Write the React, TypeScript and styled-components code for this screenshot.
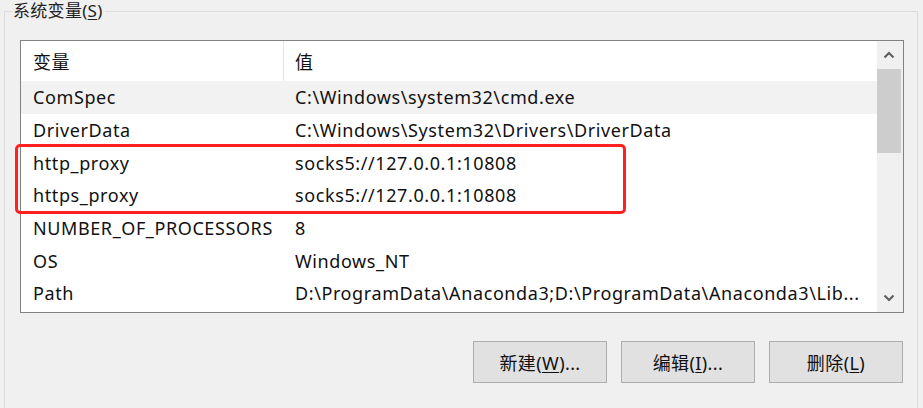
import React from 'react';
import styled, { createGlobalStyle } from 'styled-components';

const GlobalStyle = createGlobalStyle`
  html, body {
    margin: 0;
    padding: 0;
    background: #f0f0f0;
    overflow: hidden;
  }
  body {
    font-family: "Noto Sans", "Noto Sans CJK SC", sans-serif;
    color: #111;
  }
`;

const Page = styled.div`
  position: relative;
  width: 923px;
  height: 408px;
  padding: 1px 0 0 4px;
  box-sizing: border-box;
  overflow: hidden;
`;

const GroupBox = styled.fieldset`
  margin: 0;
  width: 914px;
  height: 440px;
  box-sizing: border-box;
  border: 1px solid #dcdcdc;
  padding: 19px 12px 0 15px;
  min-width: 0;
`;

const GroupTitle = styled.legend`
  margin-left: -8px;
  padding: 0 2px 0 1px;
  font-size: 17px;
  letter-spacing: 0.3px;
  line-height: 20px;
  color: #222;
`;

const ListBox = styled.div`
  width: 884px;
  height: 273px;
  box-sizing: border-box;
  border: 1px solid #828282;
  background: #fff;
  display: flex;
  overflow: hidden;
`;

const Table = styled.div`
  flex: 1;
  display: flex;
  flex-direction: column;
  min-width: 0;
`;

const HeaderRow = styled.div`
  display: grid;
  grid-template-columns: 263px 1fr;
  height: 40px;
  flex-shrink: 0;
`;

const HeaderCell = styled.div<{ $divider?: boolean }>`
  display: flex;
  align-items: center;
  padding-left: ${(p) => (p.$divider ? '12px' : '11px')};
  border-right: ${(p) => (p.$divider ? '1px solid #e5e5e5' : 'none')};
  font-size: 18px;
  letter-spacing: 0.5px;
`;

const Row = styled.div<{ $hover?: boolean }>`
  display: grid;
  grid-template-columns: 263px 1fr;
  height: 32.7px;
  flex-shrink: 0;
  align-items: center;
  background: ${(p) => (p.$hover ? '#f2f2f2' : 'transparent')};
`;

const Cell = styled.div<{ $first?: boolean }>`
  padding-left: ${(p) => (p.$first ? '12px' : '11px')};
  font-size: 18px;
  letter-spacing: 0.6px;
  white-space: nowrap;
  overflow: hidden;
`;

const ScrollBar = styled.div`
  width: 26px;
  flex-shrink: 0;
  background: #f0f0f0;
  display: flex;
  flex-direction: column;
`;

const ArrowButton = styled.div`
  height: 28px;
  display: flex;
  align-items: center;
  justify-content: center;
  padding-right: 2px;
`;

const Thumb = styled.div`
  height: 84px;
  margin-right: 2px;
  background: #cdcdcd;
`;

const Track = styled.div`
  flex: 1;
`;

const ButtonRow = styled.div`
  display: flex;
  justify-content: flex-end;
  gap: 14px;
  width: 883px;
  margin-top: 28px;
`;

const Button = styled.button`
  width: 134px;
  height: 42px;
  box-sizing: border-box;
  border: 1px solid #adadad;
  background: #e1e1e1;
  font-family: inherit;
  font-size: 18px;
  letter-spacing: 0.4px;
  color: #111;
  padding: 0;
`;

const Mnemonic = styled.span`
  text-decoration: underline;
  text-underline-offset: 2px;
`;

const Highlight = styled.div`
  position: absolute;
  left: 15px;
  top: 144px;
  width: 611px;
  height: 70px;
  box-sizing: border-box;
  border: 3px solid #ff2020;
  border-radius: 5px;
  pointer-events: none;
`;

const Chevron: React.FC<{ up?: boolean }> = ({ up }) => (
  <svg width="12" height="8" viewBox="0 0 12 8">
    <polyline
      points={up ? '1.5,6.5 6,2 10.5,6.5' : '1.5,1.5 6,6 10.5,1.5'}
      fill="none"
      stroke="#606060"
      strokeWidth="2.2"
    />
  </svg>
);

const rows: [string, string][] = [
  ['ComSpec', 'C:\\Windows\\system32\\cmd.exe'],
  ['DriverData', 'C:\\Windows\\System32\\Drivers\\DriverData'],
  ['http_proxy', 'socks5://127.0.0.1:10808'],
  ['https_proxy', 'socks5://127.0.0.1:10808'],
  ['NUMBER_OF_PROCESSORS', '8'],
  ['OS', 'Windows_NT'],
  ['Path', 'D:\\ProgramData\\Anaconda3;D:\\ProgramData\\Anaconda3\\Lib...'],
];

const App: React.FC = () => (
  <>
    <GlobalStyle />
    <Page>
      <GroupBox>
        <GroupTitle>
          系统变量(<Mnemonic>S</Mnemonic>)
        </GroupTitle>
        <ListBox>
          <Table>
            <HeaderRow>
              <HeaderCell $divider>变量</HeaderCell>
              <HeaderCell>值</HeaderCell>
            </HeaderRow>
            {rows.map(([name, value], i) => (
              <Row key={name} $hover={i === 0}>
                <Cell $first>{name}</Cell>
                <Cell>{value}</Cell>
              </Row>
            ))}
          </Table>
          <ScrollBar>
            <ArrowButton>
              <Chevron up />
            </ArrowButton>
            <Thumb />
            <Track />
            <ArrowButton>
              <Chevron />
            </ArrowButton>
          </ScrollBar>
        </ListBox>
        <ButtonRow>
          <Button>
            新建(<Mnemonic>W</Mnemonic>)...
          </Button>
          <Button>
            编辑(<Mnemonic>I</Mnemonic>)...
          </Button>
          <Button>
            删除(<Mnemonic>L</Mnemonic>)
          </Button>
        </ButtonRow>
      </GroupBox>
      <Highlight />
    </Page>
  </>
);

export default App;
